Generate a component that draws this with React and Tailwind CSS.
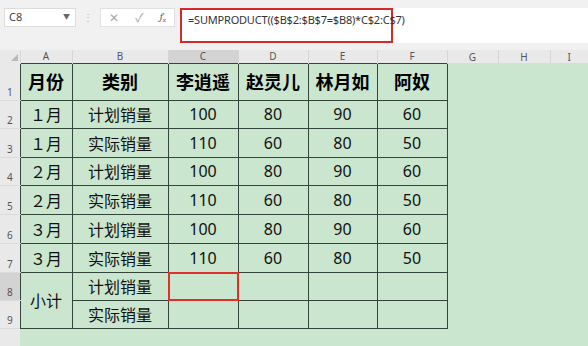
const cols = [52, 96, 70, 70, 69, 70, 51, 52, 38];
const letters = ['A', 'B', 'C', 'D', 'E', 'F', 'G', 'H', 'I'];
const heights = [37, 28, 29, 28, 29, 29, 29, 28, 28];

const rows = [
  ['１月', '计划销量', '100', '80', '90', '60'],
  ['１月', '实际销量', '110', '60', '80', '50'],
  ['２月', '计划销量', '100', '80', '90', '60'],
  ['２月', '实际销量', '110', '60', '80', '50'],
  ['３月', '计划销量', '100', '80', '90', '60'],
  ['３月', '实际销量', '110', '60', '80', '50'],
];

const cjk = { fontFamily: '"Noto Sans CJK SC", "Noto Sans", sans-serif' };
const line = 'border border-[#33443a]';

function RowHead({ n, h, active }) {
  return (
    <td
      style={{ height: h }}
      className={`${active ? 'bg-[#d3d3d3]' : 'bg-[#e9e9e9]'} border-b border-[#dadada] align-bottom pl-[7px] pb-[3px] text-[10px] leading-none text-[#555]`}
    >
      {n}
    </td>
  );
}

export default function App() {
  return (
    <div className="w-[588px] h-[346px] overflow-hidden bg-[#cbe6cf]" style={{ fontFamily: '"Noto Sans", "Noto Sans CJK SC", sans-serif' }}>
      {/* formula bar */}
      <div className="h-[50px] bg-[#f1f1f1] relative flex items-start pt-[8px] pl-[4px] gap-[6px]">
        <div className="w-[72px] h-[19px] bg-white border border-[#dcdcdc] flex items-center justify-between pl-[4px] pr-[5px] text-[11px] text-[#444]">
          <span>C8</span>
          <span className="text-[7px] text-[#666]">▼</span>
        </div>
        <div className="w-[12px] h-[19px] flex items-center justify-center text-[#b5b5b5] text-[10px]">⋮</div>
        <div className="w-[75px] h-[19px] bg-white border border-[#e0e0e0] flex items-center justify-around text-[#a8a8a8] text-[12px]">
          <span>✕</span>
          <span>✓</span>
          <span className="italic font-serif text-[#666] text-[11px]">f<sub className="text-[7px]">x</sub></span>
        </div>
        <div className="flex-1 h-[35px] bg-white ml-[-1px]">
          <div className="w-[213px] h-[35px] border-2 border-[#d42a2a] pl-[6px] pt-[3px] text-[11px] text-[#333] leading-tight tracking-[-0.2px]">
            =SUMPRODUCT(($B$2:$B$7=$B8)*C$2:C$7)
          </div>
        </div>
      </div>

      <table className="table-fixed border-collapse">
        <colgroup>
          <col style={{ width: 20 }} />
          {cols.map((w, i) => (
            <col key={i} style={{ width: w }} />
          ))}
        </colgroup>
        <tbody>
          <tr>
            <td className="h-[13px] bg-[#e9e9e9] relative">
              <div className="absolute right-[2px] bottom-[2px] w-0 h-0 border-l-[7px] border-l-transparent border-b-[7px] border-b-[#b9b9b9]" />
            </td>
            {letters.map((l) => (
              <td
                key={l}
                className={`h-[13px] text-center text-[10px] leading-none text-[#555] border-l border-[#d6d6d6] ${l === 'C' ? 'bg-[#d3d3d3]' : 'bg-[#e9e9e9]'}`}
              >
                {l}
              </td>
            ))}
          </tr>

          <tr>
            <RowHead n={1} h={heights[0]} />
            {['月份', '类别', '李逍遥', '赵灵儿', '林月如', '阿奴'].map((t) => (
              <td key={t} className={`${line} text-center font-bold text-[18px] text-black`} style={cjk}>
                {t}
              </td>
            ))}
            <td colSpan={3} />
          </tr>

          {rows.map((r, i) => (
            <tr key={i}>
              <RowHead n={i + 2} h={heights[i + 1]} />
              {r.map((c, j) => (
                <td key={j} className={`${line} text-center text-[16px] text-[#111]`} style={j < 2 ? cjk : undefined}>
                  {c}
                </td>
              ))}
              <td colSpan={3} />
            </tr>
          ))}

          <tr>
            <RowHead n={8} h={heights[7]} active />
            <td rowSpan={2} className={`${line} text-center text-[16px] text-[#111]`} style={cjk}>
              小计
            </td>
            <td className={`${line} text-center text-[16px] text-[#111]`} style={cjk}>
              计划销量
            </td>
            <td className={`${line} relative`}>
              <div className="absolute inset-[-1px] border-2 border-[#e0302c]" />
            </td>
            <td className={line} />
            <td className={line} />
            <td className={line} />
            <td colSpan={3} />
          </tr>
          <tr>
            <RowHead n={9} h={heights[8]} />
            <td className={`${line} text-center text-[16px] text-[#111]`} style={cjk}>
              实际销量
            </td>
            <td className={line} />
            <td className={line} />
            <td className={line} />
            <td className={line} />
            <td colSpan={3} />
          </tr>
          <tr>
            <td className="h-[20px] bg-[#e9e9e9]" />
            <td colSpan={9} />
          </tr>
        </tbody>
      </table>
    </div>
  );
}
